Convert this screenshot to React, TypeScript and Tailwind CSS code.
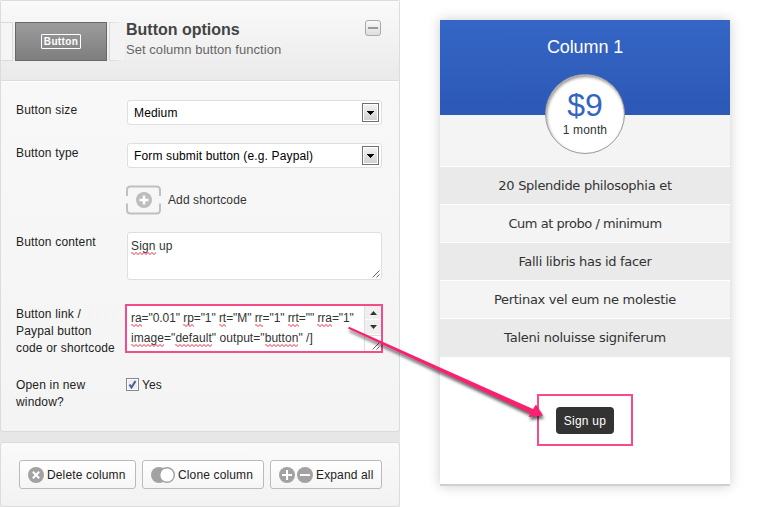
import React from "react";

const zigzag = "M0 1.500" + "l1 -1l1 1l1 1l1 -1".repeat(16);

function Misspelled({ children }: { children: string }) {
  return (
    <span className="relative">
      {children}
      <svg className="absolute bottom-[-2px] left-0 h-[3px] w-full overflow-hidden" fill="none">
        <path d={zigzag} stroke="#f01030" strokeWidth="1" />
      </svg>
    </span>
  );
}

function Select({ value }: { value: string }) {
  return (
    <div className="flex h-[25px] w-[255px] items-center justify-between rounded-[3px] border border-[#dfdfdf] bg-white pr-[2px] pl-[6px] text-black">
      <span className="whitespace-nowrap tracking-[0.14px]">{value}</span>
      <span className="flex h-[19px] w-[17px] items-center justify-center border border-[#707070] bg-gradient-to-b from-[#f4f4f4] to-[#cfcfcf] shadow-[inset_0_0_0_1px_#fff]">
        <svg width="7" height="4" shapeRendering="crispEdges">
          <path d="M0 0h7v1H0zM1 1h5v1H1zM2 2h3v1H2zM3 3h1v1H3z" fill="#000" />
        </svg>
      </span>
    </div>
  );
}

function Grip() {
  return (
    <svg width="8" height="8" className="absolute right-[1px] bottom-[1px]">
      <path d="M0.5 7.5 7.5 0.5M4.5 7.5 7.5 4.5" stroke="#666" strokeWidth="1" />
    </svg>
  );
}

function Label({ children }: { children: React.ReactNode }) {
  return <div className="w-[111px] shrink-0 leading-[17px] tracking-[0.17px] whitespace-nowrap text-[#222]">{children}</div>;
}

function ActionButton({ width, icon, children }: { width: string; icon: React.ReactNode; children: string }) {
  return (
    <button className={`flex h-[29px] ${width} items-center gap-[3px] rounded-[3px] border border-[#bbb] bg-gradient-to-b from-white to-[#f5f5f5] pl-2 tracking-[0.14px] whitespace-nowrap text-[#222]`}>
      {icon}
      <span>{children}</span>
    </button>
  );
}

const features = [
  { text: "20 Splendide philosophia et", style: "bg-[#eaeaea] border-b tracking-[-0.28px]" },
  { text: "Cum at probo / minimum", style: "bg-[#f4f4f4] border-b tracking-[-0.45px]" },
  { text: "Falli libris has id facer", style: "bg-[#eaeaea] border-b tracking-[-0.3px]" },
  { text: "Pertinax vel eum ne molestie", style: "bg-[#f4f4f4] border-b tracking-[-0.28px]" },
  { text: "Taleni noluisse signiferum", style: "bg-[#eaeaea] tracking-[-0.24px]" },
];

export default function App() {
  return (
    <div className="relative flex h-[507px] w-[771px] overflow-hidden bg-white font-['Liberation_Sans',Arial,sans-serif] text-[12px]">
      <div className="flex w-[400px] shrink-0 flex-col gap-[10px] bg-[#e7e7e7]">
        <section className="h-[432px] rounded-[3px] border border-[#dcdcdc] bg-gradient-to-b from-[#f9f9f9] to-[#f4f4f4]">
          <header className="flex h-[80px] border-b border-[#dcdcdc] bg-gradient-to-b from-[#fafafa] to-[#eaeaea] pt-[19px]">
            <div className="mt-[2px] flex h-[39px] w-[125px] shrink-0 gap-[2px]">
              <div className="w-[12px] border border-l-0 border-[#d9d9d9] bg-[#f5f5f5]" />
              <div className="flex w-[92px] items-center justify-center border border-[#686868] bg-gradient-to-b from-[#9c9c9c] to-[#7e7e7e]">
                <span className="flex h-[15px] w-[40px] items-center justify-center rounded-[1px] border border-white text-[10px] leading-none font-bold tracking-[0.35px] text-white">
                  <span>Button</span>
                </span>
              </div>
              <div className="w-[15px] bg-gradient-to-r from-[#d9d9d9] to-transparent p-px pr-0">
                <div className="h-full w-full bg-[#f3f3f3]" />
              </div>
            </div>
            <div className="flex-1 whitespace-nowrap">
              <h2 className="text-[16px] leading-[19px] font-bold text-[#444]">Button options</h2>
              <p className="mt-[2px] text-[13px] leading-[17px] tracking-[0.05px] text-[#666]">Set column button function</p>
            </div>
            <div className="mr-[18px] flex h-4 w-4 items-center justify-center rounded-[3px] border border-[#aaa] bg-gradient-to-b from-[#f8f8f8] to-[#dedede]">
              <div className="h-[2px] w-[10px] bg-[#999]" />
            </div>
          </header>
          <div className="border-t border-white pl-[15px]">
            <div className="flex pt-[18px]">
              <div className="pt-[2px]"><Label>Button size</Label></div>
              <Select value="Medium" />
            </div>
            <div className="flex pt-[18px]">
              <div className="pt-[2px]"><Label>Button type</Label></div>
              <Select value="Form submit button (e.g. Paypal)" />
            </div>
            <div className="mt-[17px] ml-[110px] flex h-[30px] items-center">
              <svg width="35" height="30" fill="none">
                <path d="M1 11V5Q1 1.5 4.500 1.500H30.500Q34 1.500 34 5V11M1 18.500V25Q1 28.500 4.500 28.500H30.500Q34 28.500 34 25V18.500" stroke="#c0c0c0" strokeWidth="2" />
                <circle cx="18" cy="15" r="8" fill="#bdbdbd" />
                <path d="M18 10.500v9M13.500 15h9" stroke="#fff" strokeWidth="2.400" />
              </svg>
              <span className="ml-[7px] tracking-[0.1px] text-[#333]">Add shortcode</span>
            </div>
            <div className="flex pt-[17px]">
              <div className="pt-[2px]"><Label>Button content</Label></div>
              <div className="relative h-[48px] w-[255px] rounded-[3px] border border-[#dfdfdf] bg-white pt-[6px] pl-[3px] leading-[14px] tracking-[0.14px] text-[#333]">
                <Misspelled>Sign</Misspelled> up
                <Grip />
              </div>
            </div>
            <div className="flex h-[73px] pt-[24px]">
              <div className="pt-[2px]"><Label>Button link /<br />Paypal button<br />code or shortcode</Label></div>
              <div className="-ml-[2px] flex h-[49px] w-[258px] border-2 border-[#f74a88] bg-white">
                <div className="w-[237px] pt-[2px] pl-[4px] leading-[20px] whitespace-nowrap text-[#333]">
                  <div className="tracking-[-0.07px]">
                    <Misspelled>ra</Misspelled>="0.01" <Misspelled>rp</Misspelled>="1" <Misspelled>rt</Misspelled>="M" <Misspelled>rr</Misspelled>="1" <Misspelled>rrt</Misspelled>="" <Misspelled>rra</Misspelled>="1"
                  </div>
                  <div className="tracking-[0.06px]">
                    <Misspelled>image</Misspelled>="<Misspelled>default</Misspelled>" output="<Misspelled>button</Misspelled>" /]
                  </div>
                </div>
                <div className="relative flex-1 border-l border-[#ddd]">
                  <div className="flex h-[13px] items-center justify-center bg-[#efefef]">
                    <svg width="7" height="4"><path d="M0 4 3.500 0 7 4z" fill="#333" /></svg>
                  </div>
                  <div className="mt-px flex h-[14px] items-center justify-center bg-[#efefef]">
                    <svg width="7" height="4"><path d="M0 0 3.500 4 7 0z" fill="#333" /></svg>
                  </div>
                  <div className="mt-px border-t border-[#ddd]" />
                  <Grip />
                </div>
              </div>
            </div>
            <div className="flex pt-[24px]">
              <Label>Open in new<br />window?</Label>
              <div className="-mt-px flex h-[17px] items-center gap-[3px]">
                <span className="-ml-px flex h-[13px] w-[13px] items-center justify-center border border-[#888] bg-[#eee] shadow-[inset_0_0_0_1px_#fff]">
                  <svg width="9" height="9" fill="none"><path d="M1.500 4.500 3.500 7.500 7.500 1" stroke="#4a5a9c" strokeWidth="2" /></svg>
                </span>
                <span className="tracking-[0.14px] text-[#222]">Yes</span>
              </div>
            </div>
          </div>
        </section>
        <section className="flex h-[65px] gap-[6px] rounded-[3px] border border-[#dcdcdc] bg-gradient-to-b from-[#fafafa] to-[#f2f2f2] pt-[17px] pl-[18px]">
          <ActionButton width="w-[117px]" icon={
            <svg width="16" height="16"><circle cx="8" cy="8" r="8" fill="#a2a2a2" /><path d="m4.800 4.800 6.400 6.400M11.200 4.800l-6.400 6.400" stroke="#fff" strokeWidth="2" /></svg>
          }>Delete column</ActionButton>
          <ActionButton width="w-[122px]" icon={
            <svg width="24" height="16"><circle cx="8" cy="8" r="8" fill="#a2a2a2" /><circle cx="16" cy="8" r="7.300" fill="#fff" stroke="#a2a2a2" strokeWidth="1.400" /></svg>
          }>Clone column</ActionButton>
          <ActionButton width="w-[112px]" icon={
            <svg width="34" height="16"><circle cx="8" cy="8" r="8" fill="#a2a2a2" /><circle cx="26" cy="8" r="8" fill="#a2a2a2" /><path d="M8 3v10M3 8h10M21 8h10" stroke="#fff" strokeWidth="2" /></svg>
          }>Expand all</ActionButton>
        </section>
      </div>

      <div className="mt-5 ml-10 flex h-[466px] w-[290px] flex-col border-b-2 border-[#d0d0d0] bg-white text-center shadow-[0_0_12px_rgba(0,0,0,0.2)]">
        <div className="h-[95px] bg-gradient-to-b from-[#3566c5] to-[#2c58b6] pt-[17px] text-[18px] leading-[21px] tracking-[-0.1px] text-white">Column 1</div>
        <div className="h-[52px] border-b border-white bg-[#f4f4f4]">
          <div className="relative -mt-[41px] mx-auto flex h-[80px] w-[80px] flex-col items-center rounded-full border border-[#999] bg-white pt-[12px] shadow-[inset_1px_2px_3px_rgba(0,0,0,0.4)]">
            <div className="text-[32px] leading-[36px] text-[#3464c4]">$9</div>
            <div className="leading-[14px] tracking-[0.14px] whitespace-nowrap text-[#333]">1 month</div>
          </div>
        </div>
        <ul className="font-['DejaVu_Sans',Verdana,sans-serif] text-[13px] leading-[37px] text-[#333]">
          {features.map((f) => (
            <li key={f.text} className={`h-[38px] border-white ${f.style}`}>{f.text}</li>
          ))}
        </ul>
        <div className="mt-[37px] ml-[97px] flex h-[52px] w-[96px] items-center justify-center border-2 border-[#f74a88]">
          <button className="h-[27px] w-[58px] rounded-[4px] bg-[#333] pt-px tracking-[0.25px] text-white">Sign up</button>
        </div>
      </div>

      <svg className="pointer-events-none absolute inset-0 h-full w-full drop-shadow-[1px_3px_1.5px_rgba(0,0,0,0.6)]">
        <path d="M348 328.500 349 326.800 533 409 536 404.500 543 415.500 528.500 417 530.500 413.500Z" fill="#fa1f70" />
      </svg>
    </div>
  );
}
